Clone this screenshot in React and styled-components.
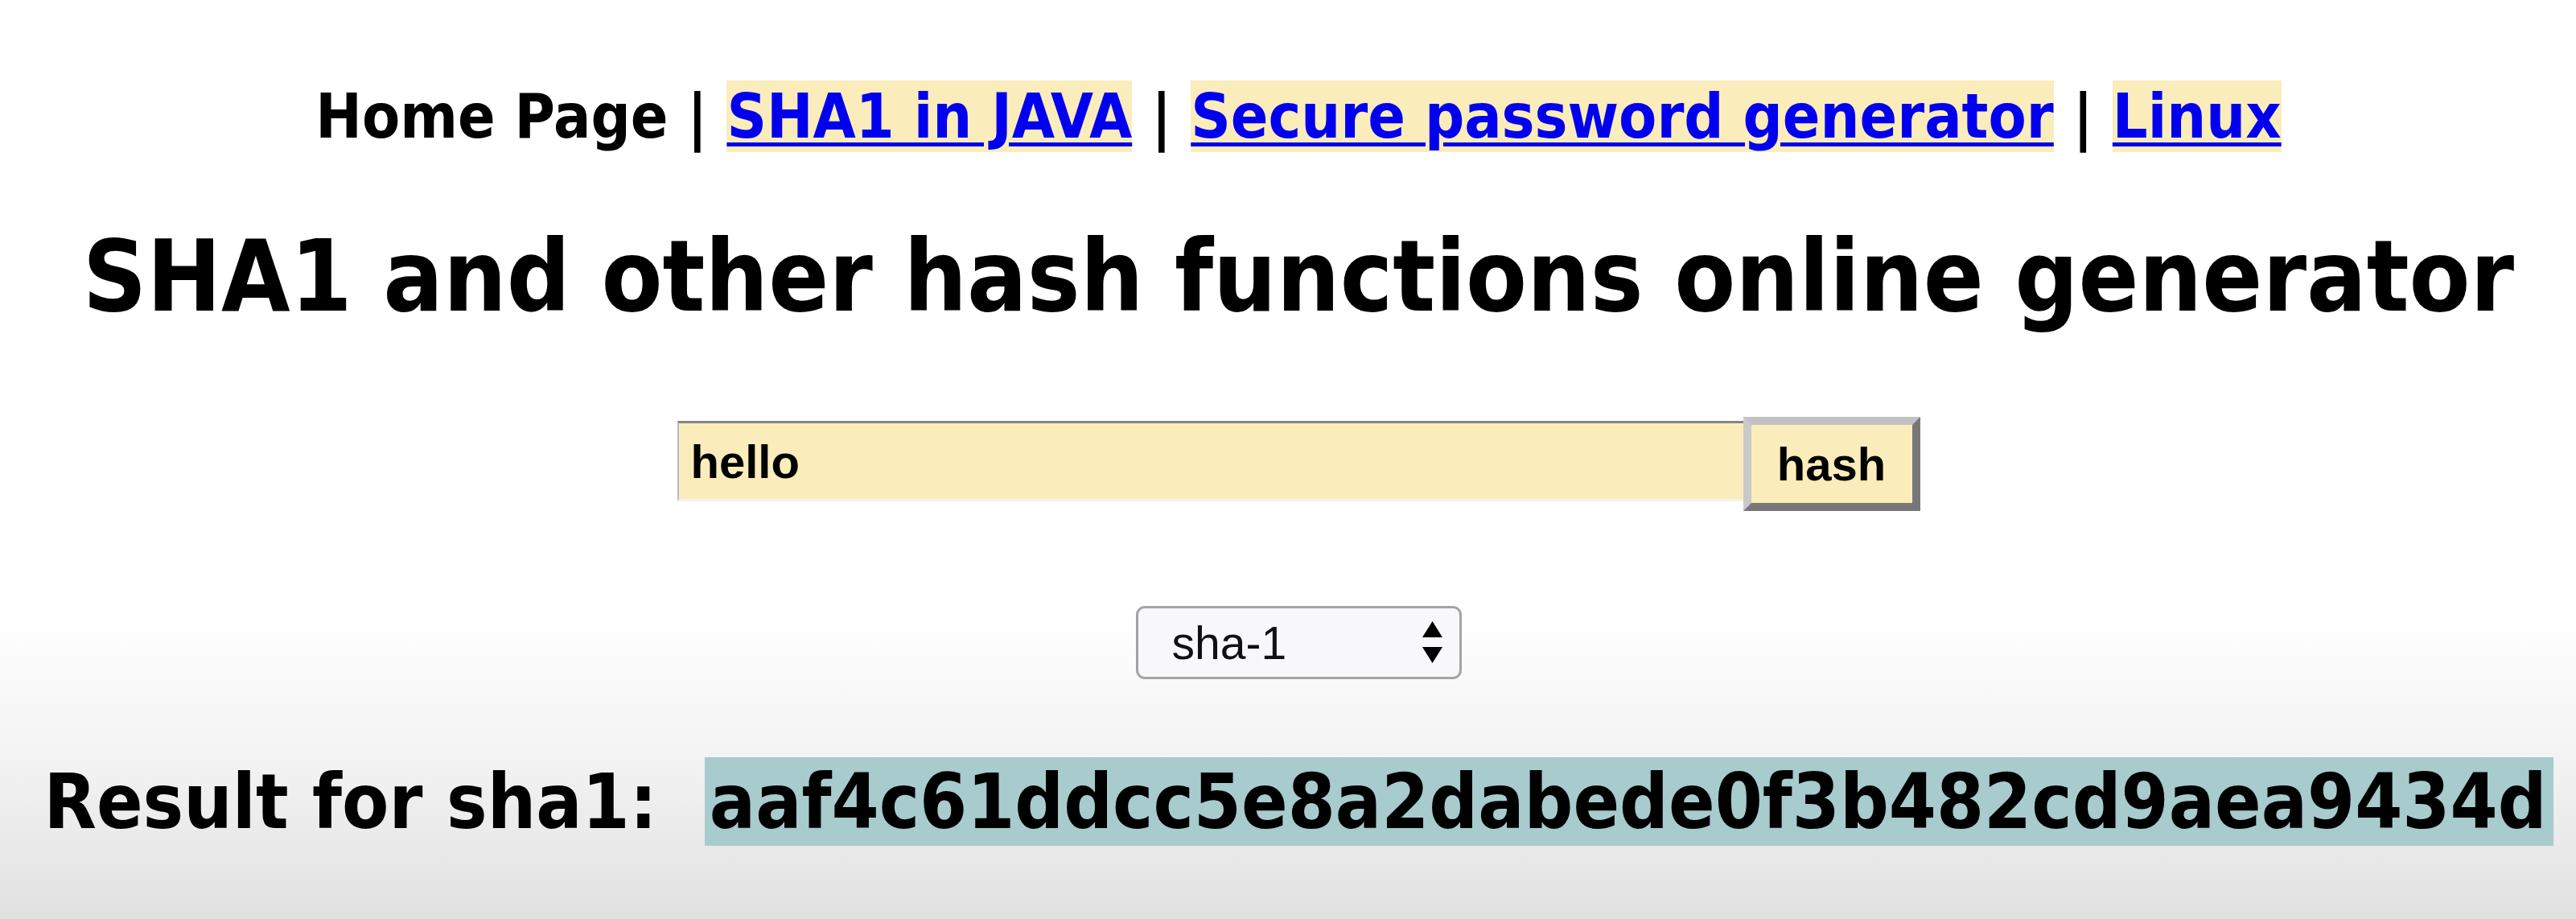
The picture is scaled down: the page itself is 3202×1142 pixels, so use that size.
import React from "react";
import styled, { createGlobalStyle } from "styled-components";

const Global = createGlobalStyle`
  html, body {
    margin: 0;
    padding: 0;
  }
  body {
    min-height: 1142px;
    background: linear-gradient(
      to bottom,
      #ffffff 0px,
      #ffffff 760px,
      #f4f4f4 930px,
      #e1e1e1 1142px
    );
    font-family: "DejaVu Sans Condensed", "DejaVu Sans", sans-serif;
    font-stretch: condensed;
    color: #000;
  }
`;

const Page = styled.div`
  box-sizing: border-box;
  width: 3202px;
  height: 1142px;
  padding: 100px 0 0 26px;
  display: flex;
  flex-direction: column;
  align-items: center;
`;

const Nav = styled.nav`
  font-weight: bold;
  font-size: 76.5px;
  line-height: normal;
  white-space: nowrap;
`;

const NavLink = styled.a`
  color: #0000ee;
  background: #fbecbb;
  text-decoration: underline;
  text-decoration-thickness: 5px;
  text-underline-offset: 6px;
`;

const Title = styled.h1`
  margin: 83px 0 0;
  font-size: 123px;
  font-weight: bold;
  line-height: normal;
  white-space: nowrap;
`;

const HashForm = styled.form`
  display: flex;
  align-items: flex-start;
  margin-top: 103px;
`;

const TextInput = styled.input`
  box-sizing: border-box;
  width: 1325px;
  height: 100px;
  margin-top: 5px;
  padding: 0 0 0 15px;
  background: #fbecbb;
  border: none;
  border-top: 3px solid #858585;
  border-left: 2px solid #bcbcbc;
  border-bottom: 3px solid #f2f2f2;
  font-family: "Liberation Sans", Arial, sans-serif;
  font-weight: bold;
  font-size: 58px;
  color: #000;
  outline: none;
`;

const HashButton = styled.button`
  box-sizing: border-box;
  width: 220px;
  height: 117px;
  padding: 0;
  background: #fbecbb;
  border: 10px solid;
  border-color: #c2c2c2 #777777 #777777 #c9c9c9;
  font-family: "Liberation Sans", Arial, sans-serif;
  font-weight: bold;
  font-size: 58px;
  color: #000;
`;

const SelectWrap = styled.div`
  position: relative;
  margin-top: 118px;
  width: 405px;
  height: 91px;
`;

const AlgoSelect = styled.select`
  appearance: none;
  -webkit-appearance: none;
  box-sizing: border-box;
  width: 100%;
  height: 100%;
  padding: 0 0 0 42px;
  background: #f8f8fa;
  border: 3px solid #a4a4a4;
  border-radius: 11px;
  font-family: "Liberation Sans", Arial, sans-serif;
  font-size: 57px;
  color: #111;
  outline: none;
`;

const Arrows = styled.svg`
  position: absolute;
  right: 24px;
  top: 19px;
  pointer-events: none;
`;

const ResultLine = styled.div`
  margin-top: 97px;
  font-size: 94.5px;
  font-weight: bold;
  line-height: normal;
  white-space: nowrap;
`;

const HashValue = styled.span`
  background: #a8cbcd;
  padding: 0 8px 0 6px;
`;

const Sep = styled.span`
  color: #000;
`;

export default function App() {
  return (
    <>
      <Global />
      <Page>
        <Nav>
          Home Page <Sep>|</Sep> <NavLink href="#">SHA1 in JAVA</NavLink>{" "}
          <Sep>|</Sep> <NavLink href="#">Secure password generator</NavLink>{" "}
          <Sep>|</Sep> <NavLink href="#">Linux</NavLink>
        </Nav>
        <Title>SHA1 and other hash functions online generator</Title>
        <HashForm onSubmit={(e) => e.preventDefault()}>
          <TextInput type="text" defaultValue="hello" />
          <HashButton type="submit">hash</HashButton>
        </HashForm>
        <SelectWrap>
          <AlgoSelect defaultValue="sha-1">
            <option value="md2">md2</option>
            <option value="md5">md5</option>
            <option value="sha-1">sha-1</option>
            <option value="sha-256">sha-256</option>
            <option value="sha-384">sha-384</option>
            <option value="sha-512">sha-512</option>
          </AlgoSelect>
          <Arrows width="25" height="52" viewBox="0 0 25 52">
            <polygon points="12.5,0 25,20 0,20" fill="#000" />
            <polygon points="0,32 25,32 12.5,52" fill="#000" />
          </Arrows>
        </SelectWrap>
        <ResultLine>
          Result for sha1:{"\u00a0 "}
          <HashValue>aaf4c61ddcc5e8a2dabede0f3b482cd9aea9434d</HashValue>
        </ResultLine>
      </Page>
    </>
  );
}
